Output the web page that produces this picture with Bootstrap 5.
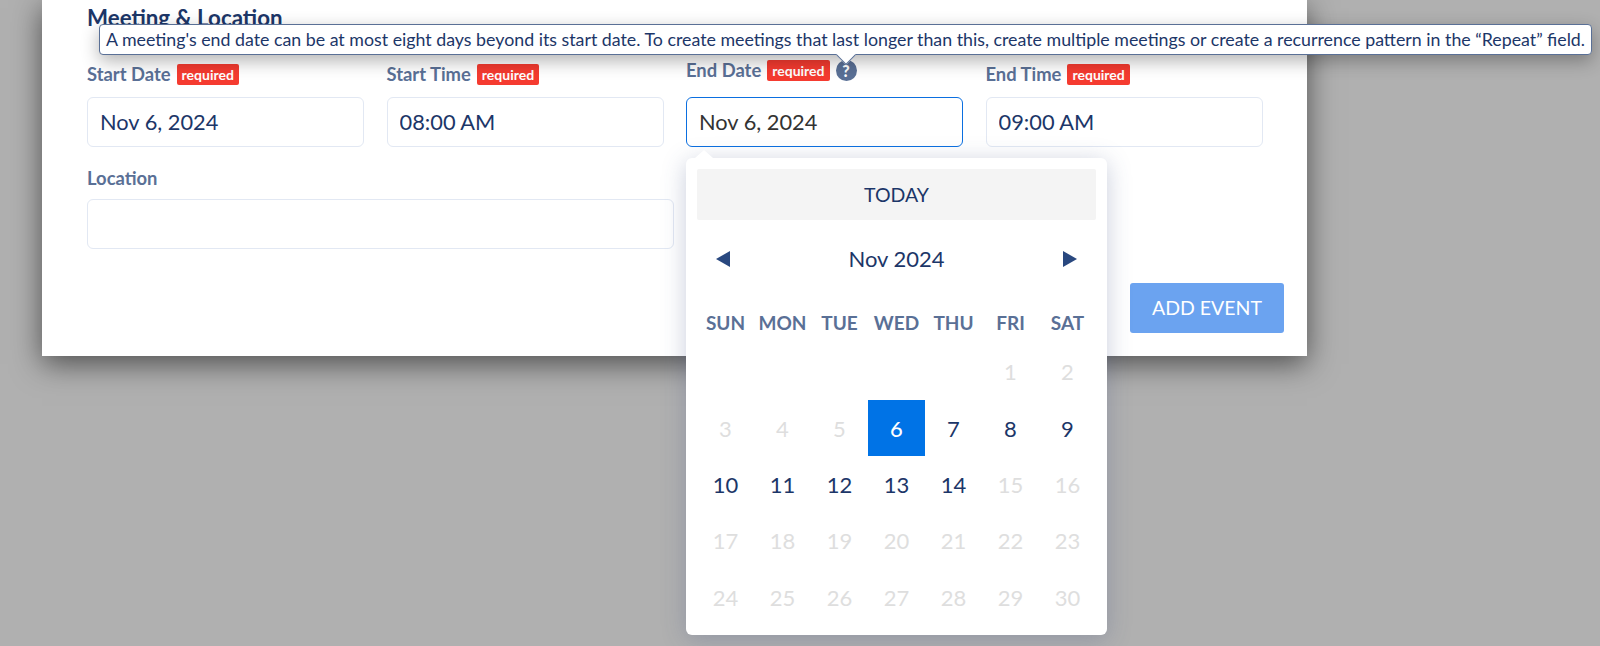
<!DOCTYPE html>
<html lang="en">

<head>
    <meta charset="UTF-8">
    <title>Add event</title>
    <link href="https://cdn.jsdelivr.net/npm/bootstrap@5.3.3/dist/css/bootstrap.min.css" rel="stylesheet">
    <style>
        body {
            background-color: #b0b0b0;
            font-family: 'Lato', 'Liberation Sans', sans-serif;
            color: #1c3668;
            height: 646px;
            overflow: hidden;
        }

        .sheet {
            width: 1265px;
            height: 356px;
            margin-left: 42px;
            padding: 5px 23px 0 45px;
            background-color: #fff;
            box-shadow: 0 8px 28px rgba(0, 0, 0, 0.55);
        }

        .sheet-title {
            font-size: 22.3px;
            font-weight: 700;
            line-height: 26px;
            margin: 0 0 30.5px;
            color: #1c3668;
        }

        .date-fields {
            display: grid;
            grid-template-columns: repeat(4, 277px);
            column-gap: 22.5px;
        }

        .field-label {
            height: 33px;
            padding-bottom: 11px;
            gap: 6px;
            font-size: 18.4px;
            font-weight: 700;
            color: #5a7096;
            white-space: nowrap;
        }

        .field-label.raised {
            padding-bottom: 17px;
            height: 35px;
        }

        .req-tag {
            background-color: #f53b30;
            color: #fff;
            font-size: 14px;
            font-weight: 700;
            line-height: 21px;
            padding: 0 5px;
            border-radius: 2px;
        }

        .help-dot {
            width: 21px;
            height: 21px;
            border-radius: 50%;
            background-color: #5a7096;
            color: #fff;
            font-size: 16px;
            font-weight: 900;
            line-height: 21px;
            text-align: center;
        }

        .text-box {
            height: 50px;
            padding: 0 12px;
            font-size: 21.8px;
            color: #1c3668;
            border: 1px solid #e2e8f3;
            border-radius: 6px;
        }

        .text-box.active-box {
            color: #333;
            border-color: #0b6fe0;
            box-shadow: none;
        }

        .location-block {
            width: 587px;
            margin-top: 19px;
        }

        .location-block .field-label {
            height: 33px;
            padding-bottom: 7px;
        }

        .btn-add {
            width: 154px;
            height: 50px;
            margin-top: 34px;
            font-size: 19.5px;
            color: #fff;
            background-color: #6ba3f0;
            border: 0;
            border-radius: 3px;
        }

        .hint-tip {
            left: 57px;
            top: 24px;
            height: 31px;
            padding: 0 6px;
            font-size: 17.8px;
            line-height: 29px;
            white-space: nowrap;
            color: #1c3668;
            background-color: #fff;
            border: 1px solid #5a7096;
            border-radius: 4px;
            box-shadow: 0 6px 18px rgba(0, 0, 0, 0.3);
        }

        .hint-tip::after {
            content: "";
            position: absolute;
            left: 739px;
            bottom: -8px;
            width: 14px;
            height: 14px;
            background-color: #fff;
            border-right: 1px solid #5a7096;
            border-bottom: 1px solid #5a7096;
            transform: rotate(45deg);
        }

        .picker {
            left: 0;
            top: calc(100% + 11px);
            width: 421px;
            height: 477px;
            padding: 11px;
            background-color: #fff;
            border-radius: 6px;
            box-shadow: 0 4px 24px rgba(60, 80, 130, 0.28);
        }

        .picker::before {
            content: "";
            position: absolute;
            left: 9px;
            top: -8px;
            border-left: 9px solid transparent;
            border-right: 9px solid transparent;
            border-bottom: 8px solid #fff;
        }

        .today-btn {
            height: 51px;
            padding-bottom: 5px;
            font-size: 19.5px;
            color: #1c3668;
            background-color: #f4f4f4;
            border: 0;
            border-radius: 2px;
        }

        .month-row {
            height: 78px;
            padding: 0 19px;
            font-size: 22px;
        }

        .tri-left,
        .tri-right {
            width: 0;
            height: 0;
            border-top: 8px solid transparent;
            border-bottom: 8px solid transparent;
        }

        .tri-left {
            border-right: 14px solid #29487f;
        }

        .tri-right {
            border-left: 14px solid #29487f;
        }

        .week-row,
        .day-grid {
            display: grid;
            grid-template-columns: repeat(7, 57px);
            text-align: center;
        }

        .week-row {
            height: 33px;
            margin-top: 13px;
            font-size: 19px;
            font-weight: 700;
            line-height: 24px;
            color: #5a7096;
        }

        .day-grid {
            grid-auto-rows: 56.4px;
            font-size: 22px;
        }

        .day-cell {
            display: flex;
            align-items: center;
            justify-content: center;
        }

        .day-cell.off {
            color: #dedede;
        }

        .day-cell.picked {
            background-color: #0073e6;
            color: #fff;
            font-weight: 500;
        }
    </style>
</head>

<body>

    <div class="sheet position-relative">
        <h5 class="sheet-title">Meeting &amp; Location</h5>

        <div class="date-fields">
            <div class="d-flex flex-column justify-content-end">
                <div class="field-label d-flex align-items-center">Start Date <span class="req-tag">required</span></div>
                <input type="text" class="form-control text-box" value="Nov 6, 2024">
            </div>
            <div class="d-flex flex-column justify-content-end">
                <div class="field-label d-flex align-items-center">Start Time <span class="req-tag">required</span></div>
                <input type="text" class="form-control text-box" value="08:00 AM">
            </div>
            <div class="position-relative d-flex flex-column justify-content-end">
                <div class="field-label raised d-flex align-items-center">End Date <span class="req-tag">required</span> <span class="help-dot">?</span></div>
                <input type="text" class="form-control text-box active-box" value="Nov 6, 2024">

                <div class="picker position-absolute">
                    <button type="button" class="btn today-btn w-100">TODAY</button>
                    <div class="month-row d-flex align-items-center justify-content-between">
                        <span class="tri-left"></span>
                        <span>Nov 2024</span>
                        <span class="tri-right"></span>
                    </div>
                    <div class="week-row">
                        <div>SUN</div><div>MON</div><div>TUE</div><div>WED</div><div>THU</div><div>FRI</div><div>SAT</div>
                    </div>
                    <div class="day-grid">
                        <div></div><div></div><div></div><div></div><div></div>
                        <div class="day-cell off">1</div><div class="day-cell off">2</div>
                        <div class="day-cell off">3</div><div class="day-cell off">4</div><div class="day-cell off">5</div>
                        <div class="day-cell picked">6</div>
                        <div class="day-cell">7</div><div class="day-cell">8</div><div class="day-cell">9</div>
                        <div class="day-cell">10</div><div class="day-cell">11</div><div class="day-cell">12</div>
                        <div class="day-cell">13</div><div class="day-cell">14</div>
                        <div class="day-cell off">15</div><div class="day-cell off">16</div>
                        <div class="day-cell off">17</div><div class="day-cell off">18</div><div class="day-cell off">19</div>
                        <div class="day-cell off">20</div><div class="day-cell off">21</div><div class="day-cell off">22</div><div class="day-cell off">23</div>
                        <div class="day-cell off">24</div><div class="day-cell off">25</div><div class="day-cell off">26</div>
                        <div class="day-cell off">27</div><div class="day-cell off">28</div><div class="day-cell off">29</div><div class="day-cell off">30</div>
                    </div>
                </div>
            </div>
            <div class="d-flex flex-column justify-content-end">
                <div class="field-label d-flex align-items-center">End Time <span class="req-tag">required</span></div>
                <input type="text" class="form-control text-box" value="09:00 AM">
            </div>
        </div>

        <div class="location-block">
            <div class="field-label d-flex align-items-center">Location</div>
            <input type="text" class="form-control text-box">
        </div>

        <div class="d-flex justify-content-end">
            <button type="button" class="btn btn-add">ADD EVENT</button>
        </div>

        <div class="hint-tip position-absolute">A meeting's end date can be at most eight days beyond its start date. To create meetings that last longer than this, create multiple meetings or create a recurrence pattern in the “Repeat” field.</div>
    </div>

    <script src="https://cdn.jsdelivr.net/npm/bootstrap@5.3.3/dist/js/bootstrap.bundle.min.js"></script>
</body>

</html>
